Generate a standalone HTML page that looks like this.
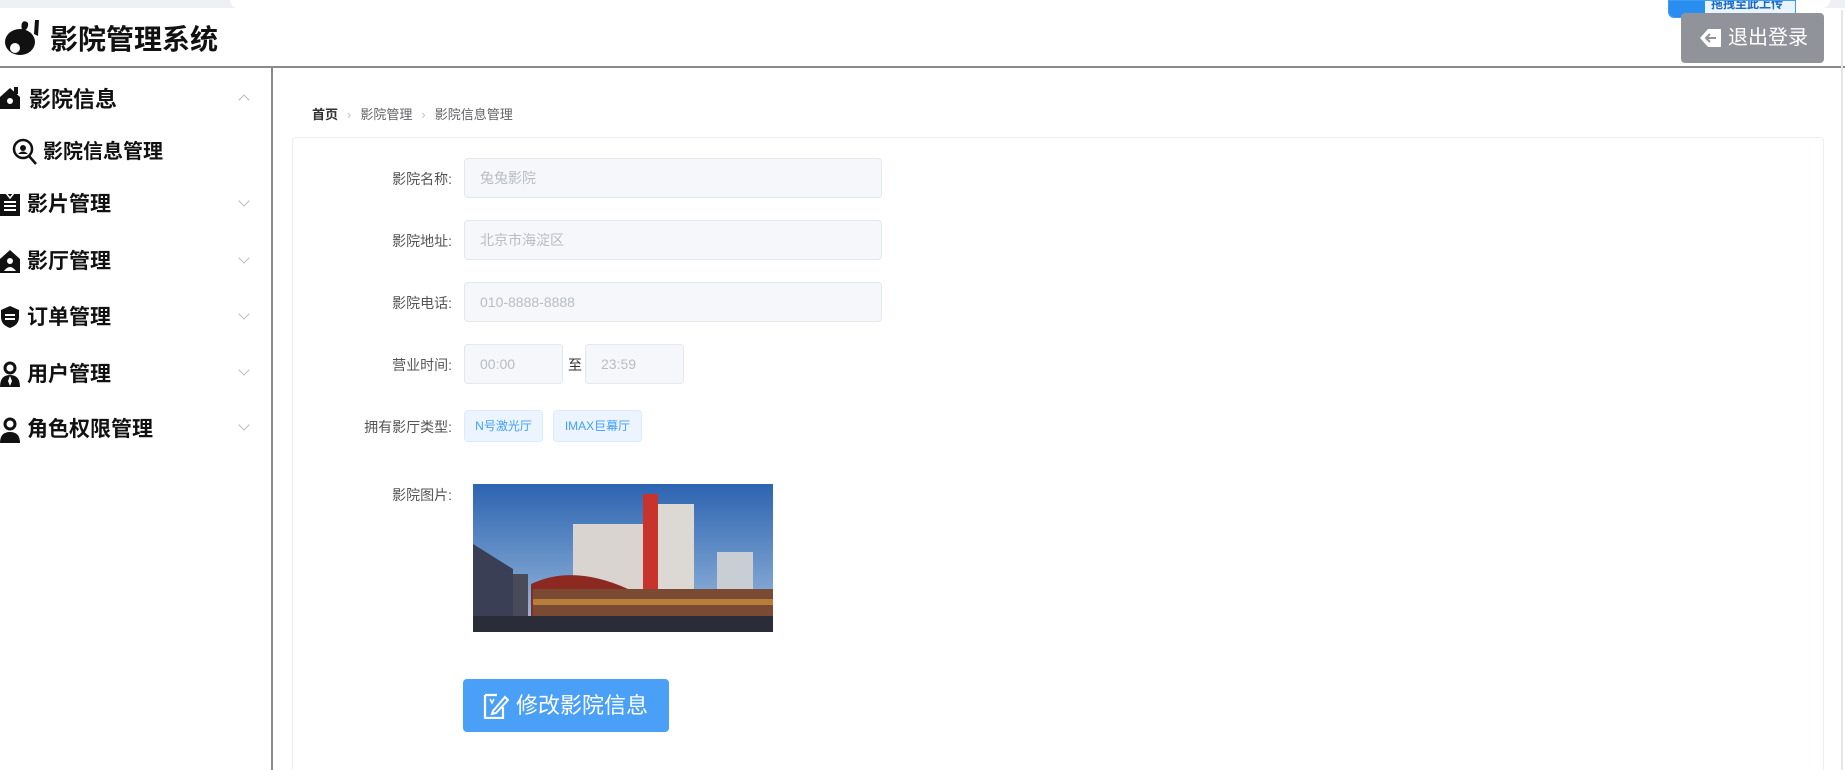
<!DOCTYPE html>
<html style="width:1845px;height:770px;overflow:hidden"><head><meta charset="utf-8"><style>
*{margin:0;padding:0;box-sizing:border-box}
body{width:1845px;height:770px;overflow:hidden;background:#fff;font-family:"Liberation Sans","Noto Sans CJK SC",sans-serif;position:relative}
.abs{position:absolute}
.top{left:0;top:0;width:1845px;height:8px;background:#eef0f3}
.topw{left:230px;top:0;width:1600px;height:8px;background:#fff;border-radius:0 0 8px 8px}
.hline{left:0;top:66px;width:1845px;height:2px;background:#8a8a8a}
.vline{left:271px;top:67px;width:2px;height:703px;background:#8a8a8a}
.logo{left:50px;top:20px;font-size:28px;font-weight:bold;color:#111;line-height:40px}
.menu{left:0;font-weight:bold;color:#111;font-size:21px;line-height:30px}
.chev{left:240px;width:8px;height:8px;border-right:1px solid #bbb;border-bottom:1px solid #bbb}
.lbl{width:210px;text-align:right;font-size:14px;color:#555;left:242px}
.inp{left:464px;height:40px;background:#f5f7fa;border:1px solid #e4e7ed;border-radius:4px;color:#b8bcc4;font-size:14px;line-height:38px;padding-left:15px}
.tag{top:410px;height:32px;background:#ecf5ff;border:1px solid #d9ecff;border-radius:4px;color:#409eff;font-size:12px;line-height:30px;text-align:center}
</style></head><body>
<div class="abs top"></div><div class="abs topw"></div>
<div class="abs" style="left:1668px;top:0;width:128px;height:18px;background:#e8f4ff;border:1px solid #3b9cf2;border-radius:0 0 6px 6px;overflow:hidden">
<div style="position:absolute;left:0;top:0;width:36px;height:18px;background:#2a8df0"></div>
<div style="position:absolute;left:42px;top:-6px;font-size:12px;color:#1a66c0;font-weight:bold">拖拽至此上传</div></div>
<div class="abs hline"></div><div class="abs vline"></div>
<div class="abs" style="left:1841px;top:10px;width:2px;height:760px;background:#e6e6e6"></div>
<svg class="abs" style="left:4px;top:18px" width="38" height="38" viewBox="0 0 38 38">
<ellipse cx="16" cy="24" rx="15" ry="13" fill="#111"/><circle cx="11" cy="30" r="5" fill="#fff"/>
<path d="M18 12 C16 4 20 1 24 5 C25 9 22 12 20 13Z" fill="#111"/><path d="M30 16 L31 2 L35 2 L34 18Z" fill="#111"/></svg>
<div class="abs logo">影院管理系统</div>
<div class="abs" style="left:1681px;top:13px;width:143px;height:50px;background:#909399;border-radius:4px;color:#fff;font-size:20px;line-height:50px">
<svg style="position:absolute;left:19px;top:14px" width="22" height="22" viewBox="0 0 22 22"><path d="M0 11 L8 2 H21 V20 H8Z" fill="#fff"/><path d="M16 11H7M10 7L6 11L10 15" stroke="#909399" stroke-width="2" fill="none"/></svg>
<span style="position:absolute;left:47px">退出登录</span></div>
<!-- sidebar -->
<svg class="abs" style="left:0;top:87px" width="20" height="22" viewBox="0 0 20 22"><path d="M0 10 L10 1 L20 10 V22 H0Z" fill="#111"/><rect x="14" y="0" width="4" height="7" fill="#111"/><circle cx="10" cy="14" r="3" fill="#fff"/></svg>
<div class="abs menu" style="left:29px;top:85px;font-size:22px">影院信息</div>
<div class="abs chev" style="top:96px;transform:rotate(-135deg)"></div>
<svg class="abs" style="left:12px;top:138px" width="26" height="28" viewBox="0 0 26 28"><circle cx="11" cy="11" r="9" stroke="#111" stroke-width="2.5" fill="none"/><circle cx="11" cy="10" r="3" fill="#111"/><path d="M6 16 Q11 11 16 16" fill="#111"/><path d="M17 18 L24 26" stroke="#111" stroke-width="2.5"/></svg>
<div class="abs menu" style="left:43px;top:137px;font-size:20px">影院信息管理</div>
<svg class="abs" style="left:0;top:192px" width="20" height="24" viewBox="0 0 20 24"><path d="M0 2H20V24H0Z" fill="#111"/><path d="M4 10H16M4 14H16M4 18H16" stroke="#fff" stroke-width="2"/><path d="M6 1 L10 6 L14 1" stroke="#fff" stroke-width="1.5" fill="none"/></svg>
<div class="abs menu" style="left:27px;top:190px">影片管理</div>
<div class="abs chev" style="top:197px;transform:rotate(45deg)"></div>
<svg class="abs" style="left:0;top:249px" width="20" height="24" viewBox="0 0 20 24"><path d="M0 10L10 1L20 10V24H0Z" fill="#111"/><circle cx="10" cy="12" r="3" fill="#fff"/><path d="M4 22Q10 14 16 22Z" fill="#fff"/></svg>
<div class="abs menu" style="left:27px;top:247px">影厅管理</div>
<div class="abs chev" style="top:254px;transform:rotate(45deg)"></div>
<svg class="abs" style="left:0;top:305px" width="20" height="24" viewBox="0 0 20 24"><path d="M10 1L19 5V12Q19 20 10 23Q1 20 1 12V5Z" fill="#111"/><path d="M5 10H15M5 14H15" stroke="#fff" stroke-width="2"/></svg>
<div class="abs menu" style="left:27px;top:303px">订单管理</div>
<div class="abs chev" style="top:310px;transform:rotate(45deg)"></div>
<svg class="abs" style="left:0;top:361px" width="20" height="26" viewBox="0 0 20 26"><circle cx="10" cy="7" r="5" stroke="#111" stroke-width="3" fill="none"/><path d="M0 26Q0 14 10 14Q20 14 20 26Z" fill="#111"/><path d="M10 15L8 20L10 25L12 20Z" fill="#fff"/></svg>
<div class="abs menu" style="left:27px;top:360px">用户管理</div>
<div class="abs chev" style="top:366px;transform:rotate(45deg)"></div>
<svg class="abs" style="left:0;top:417px" width="20" height="26" viewBox="0 0 20 26"><circle cx="10" cy="7" r="5" stroke="#111" stroke-width="3" fill="none"/><path d="M0 26Q0 15 10 15Q20 15 20 26Z" fill="#111"/></svg>
<div class="abs menu" style="left:27px;top:415px">角色权限管理</div>
<div class="abs chev" style="top:421px;transform:rotate(45deg)"></div>
<!-- main -->
<div class="abs" style="left:312px;top:106px;font-size:13px;color:#606266;line-height:18px"><b style="color:#303133">首页</b><span style="color:#c0c4cc;margin:0 9px">&#8250;</span>影院管理<span style="color:#c0c4cc;margin:0 9px">&#8250;</span>影院信息管理</div>
<div class="abs" style="left:292px;top:137px;width:1532px;height:650px;border:1px solid #ebeef5;border-bottom:none;border-radius:4px 4px 0 0"></div>
<div class="abs lbl" style="top:169px">影院名称:</div><div class="abs inp" style="top:158px;width:418px">兔兔影院</div>
<div class="abs lbl" style="top:231px">影院地址:</div><div class="abs inp" style="top:220px;width:418px">北京市海淀区</div>
<div class="abs lbl" style="top:293px">影院电话:</div><div class="abs inp" style="top:282px;width:418px">010-8888-8888</div>
<div class="abs lbl" style="top:355px">营业时间:</div><div class="abs inp" style="top:344px;width:99px">00:00</div>
<div class="abs" style="left:568px;top:355px;font-size:14px;color:#333">至</div>
<div class="abs inp" style="top:344px;left:585px;width:99px">23:59</div>
<div class="abs lbl" style="top:417px">拥有影厅类型:</div>
<div class="abs tag" style="left:464px;width:79px">N号激光厅</div>
<div class="abs tag" style="left:553px;width:89px">IMAX巨幕厅</div>
<div class="abs lbl" style="top:485px">影院图片:</div>
<svg class="abs" style="left:473px;top:484px" width="300" height="148" viewBox="0 0 300 148">
<defs><linearGradient id="s" x1="0" y1="0" x2="0" y2="1"><stop offset="0" stop-color="#2d64b0"/><stop offset="1" stop-color="#9fbfe0"/></linearGradient></defs>
<rect width="300" height="148" fill="url(#s)"/>
<path d="M0 60L40 85V135H0Z" fill="#3b3f55"/><rect x="40" y="90" width="15" height="45" fill="#4a4b5a"/>
<rect x="100" y="40" width="72" height="100" fill="#d9d4d0"/>
<rect x="170" y="10" width="15" height="120" fill="#c8342c"/><rect x="185" y="20" width="36" height="110" fill="#dcd8d4"/>
<rect x="244" y="68" width="36" height="70" fill="#c9cdd4"/>
<path d="M58 100Q100 80 155 105V135H58Z" fill="#8c2a22"/><rect x="60" y="105" width="240" height="30" fill="#7a4a32"/>
<rect x="60" y="115" width="240" height="6" fill="#e0a040" opacity=".6"/>
<rect x="0" y="132" width="300" height="16" fill="#2a2d38"/></svg>
<div class="abs" style="left:463px;top:679px;width:206px;height:53px;background:#4aa0f6;border-radius:4px;color:#fff;font-size:22px;line-height:53px">
<svg style="position:absolute;left:20px;top:14px" width="26" height="26" viewBox="0 0 26 26"><path d="M2 2H14M2 2V25H20V14" stroke="#fff" stroke-width="2.2" fill="none"/><path d="M10 18L22 4L25 7L13 20L9 21Z" stroke="#fff" stroke-width="2" fill="none"/><path d="M7 6L9 10L11 6" stroke="#fff" stroke-width="1.5" fill="none"/></svg>
<span style="position:absolute;left:53px">修改影院信息</span></div>
</body></html>
